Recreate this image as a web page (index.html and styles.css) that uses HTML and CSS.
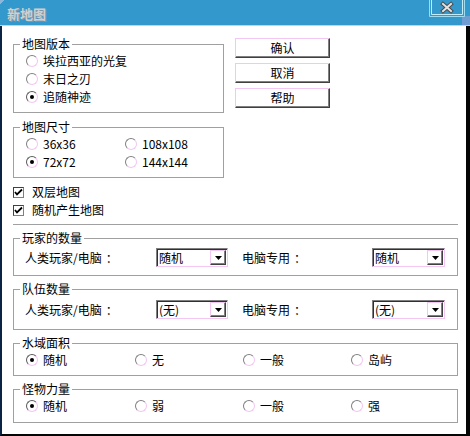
FILE: index.html
```html
<!DOCTYPE html>
<html lang="zh">
<head>
<meta charset="utf-8">
<title>新地图</title>
<link rel="stylesheet" href="styles.css">
</head>
<body>
<div class="window">
  <div class="titlebar">
    <span class="title">新地图</span>
    <span class="close">
      <svg width="36" height="18" viewBox="0 0 36 18">
        <path d="M0.5 0 V16.5 H35.5 V0" fill="none" stroke="#9fdcef"/>
        <path d="M2.5 0 V14.5 H33.5 V0" fill="none" stroke="#c4ecf8"/>
        <path d="M14 4 L22 11 M22 4 L14 11" stroke="#4a4a4a" stroke-width="4" stroke-linecap="square"/>
        <path d="M14 4 L22 11 M22 4 L14 11" stroke="#e2e2e2" stroke-width="2" stroke-linecap="square"/>
      </svg>
    </span>
  </div>
  <div class="frame">
    <div class="top">
      <div class="leftcol">
        <fieldset class="group">
          <legend>地图版本</legend>
          <div class="inner rows">
            <div class="opt"><span class="radio"></span>埃拉西亚的光复</div>
            <div class="opt"><span class="radio"></span>末日之刃</div>
            <div class="opt"><span class="radio on"></span>追随神迹</div>
          </div>
        </fieldset>
        <fieldset class="group">
          <legend>地图尺寸</legend>
          <div class="inner size-grid">
            <div class="opt"><span class="radio"></span>36x36</div>
            <div class="opt"><span class="radio"></span>108x108</div>
            <div class="opt"><span class="radio on"></span>72x72</div>
            <div class="opt"><span class="radio"></span>144x144</div>
          </div>
        </fieldset>
      </div>
      <div class="buttons">
        <div class="btn">确认</div>
        <div class="btn">取消</div>
        <div class="btn">帮助</div>
      </div>
    </div>
    <div class="checks">
      <div class="opt"><span class="check"><svg width="11" height="11" viewBox="0 0 11 11"><path d="M2 5 L4 7.5 L9 2.5" fill="none" stroke="#000" stroke-width="1.8"/></svg></span>双层地图</div>
      <div class="opt"><span class="check"><svg width="11" height="11" viewBox="0 0 11 11"><path d="M2 5 L4 7.5 L9 2.5" fill="none" stroke="#000" stroke-width="1.8"/></svg></span>随机产生地图</div>
    </div>
    <div class="sep"></div>
    <fieldset class="group g-players">
      <legend>玩家的数量</legend>
      <div class="inner sel-row">
        <span class="lbl1">人类玩家/电脑<span class="colon">：</span></span>
        <div class="select s1"><span class="val">随机</span><span class="drop"><svg width="7" height="4" viewBox="0 0 7 4"><path d="M0 0 H7 L3.5 4 Z" fill="#000"/></svg></span></div>
        <span class="lbl2">电脑专用<span class="colon">：</span></span>
        <div class="select s2"><span class="val">随机</span><span class="drop"><svg width="7" height="4" viewBox="0 0 7 4"><path d="M0 0 H7 L3.5 4 Z" fill="#000"/></svg></span></div>
      </div>
    </fieldset>
    <fieldset class="group g-teams">
      <legend>队伍数量</legend>
      <div class="inner sel-row">
        <span class="lbl1">人类玩家/电脑<span class="colon">：</span></span>
        <div class="select s1"><span class="val">(无)</span><span class="drop"><svg width="7" height="4" viewBox="0 0 7 4"><path d="M0 0 H7 L3.5 4 Z" fill="#000"/></svg></span></div>
        <span class="lbl2">电脑专用<span class="colon">：</span></span>
        <div class="select s2"><span class="val">(无)</span><span class="drop"><svg width="7" height="4" viewBox="0 0 7 4"><path d="M0 0 H7 L3.5 4 Z" fill="#000"/></svg></span></div>
      </div>
    </fieldset>
    <fieldset class="group g-water">
      <legend>水域面积</legend>
      <div class="inner four">
        <div class="opt"><span class="radio on"></span>随机</div>
        <div class="opt"><span class="radio"></span>无</div>
        <div class="opt"><span class="radio"></span>一般</div>
        <div class="opt"><span class="radio"></span>岛屿</div>
      </div>
    </fieldset>
    <fieldset class="group g-monster">
      <legend>怪物力量</legend>
      <div class="inner four">
        <div class="opt"><span class="radio on"></span>随机</div>
        <div class="opt"><span class="radio"></span>弱</div>
        <div class="opt"><span class="radio"></span>一般</div>
        <div class="opt"><span class="radio"></span>强</div>
      </div>
    </fieldset>
  </div>
</div>
</body>
</html>
```

FILE: styles.css
```css
* { box-sizing: border-box; }
html, body { margin: 0; padding: 0; }
body {
  width: 470px;
  height: 436px;
  overflow: hidden;
  background: #fff;
  font-family: "Noto Sans CJK SC", "Liberation Sans", sans-serif;
  font-size: 12px;
  line-height: 14px;
  color: #000;
}
.window {
  width: 470px;
  height: 436px;
  display: flex;
  flex-direction: column;
}
.titlebar {
  height: 26px;
  flex: none;
  display: flex;
  align-items: flex-start;
  border-bottom: 1px solid #a6def5;
  background:
    linear-gradient(135deg, #8fb6d6 0, #8fb6d6 3px, transparent 3px) left top / 8px 8px no-repeat,
    linear-gradient(#6f9dd2, #6f9dd2) right bottom / 8px 9px no-repeat,
    #3399cc;
}
.title {
  margin: 6px 0 0 7px;
  font-size: 13px;
  line-height: 15px;
  font-weight: bold;
  color: #d0d0d0;
  text-shadow: 1px 1px 0 #7f97a8;
}
.close {
  margin-left: auto;
  margin-right: 5px;
  width: 36px;
  height: 18px;
  display: block;
}
.close svg { display: block; }
.frame {
  flex: 1;
  border-left: 2px solid #0c2444;
  border-right: 4px solid #050505;
  border-bottom: 2px solid #050505;
  padding: 11px 8px 0 11px;
}
.top {
  display: flex;
  align-items: flex-start;
  gap: 11px;
}
.leftcol {
  width: 211px;
  display: flex;
  flex-direction: column;
  gap: 7px;
}
.buttons {
  display: flex;
  flex-direction: column;
  gap: 5px;
  margin-top: 1px;
}
.btn {
  width: 95px;
  height: 20px;
  background: #fff;
  border-style: solid;
  border-width: 1px;
  border-color: #f3c6f3 #404040 #404040 #f3c6f3;
  box-shadow: inset -1px -1px 0 #808080;
  display: flex;
  align-items: center;
  justify-content: center;
  padding-bottom: 1px;
}
.group {
  margin: 0;
  padding: 0;
  border: 1px solid #a0a0a0;
  min-width: 0;
}
.group legend {
  margin-left: 6px;
  padding: 0 2px;
  line-height: 14px;
}
.opt {
  height: 18px;
  display: flex;
  align-items: center;
  white-space: nowrap;
}
.radio {
  flex: none;
  width: 12px;
  height: 12px;
  margin-right: 5px;
  border-radius: 50%;
  border: 1px solid;
  border-color: #808080 #f3c6f3 #f3c6f3 #808080;
  position: relative;
}
.radio.on { border-color: #5a5a5a #f3c6f3 #f3c6f3 #5a5a5a; }
.radio.on::after {
  content: "";
  position: absolute;
  left: 3px;
  top: 3px;
  width: 4px;
  height: 4px;
  border-radius: 50%;
  background: #000;
}
.rows { padding: 1px 0 6px 12px; }
.size-grid {
  padding: 1px 0 6px 12px;
  display: grid;
  grid-template-columns: 99px auto;
}
.checks { margin-top: 5px; }
.check {
  flex: none;
  width: 11px;
  height: 11px;
  margin-right: 8px;
  border: 1px solid;
  border-color: #404040 #808080 #808080 #404040;
  background: #fff;
  display: flex;
}
.check svg { margin: -1px; }
.sep {
  margin-top: 5px;
  height: 1px;
  background: #a0a0a0;
}
.g-players { margin-top: 6px; }
.g-teams { margin-top: 6px; }
.g-water { margin-top: 6px; }
.g-monster { margin-top: 6px; }
.sel-row {
  display: flex;
  align-items: center;
  padding-left: 11px;
}
.g-players .sel-row { padding-top: 3px; padding-bottom: 8px; }
.g-teams .sel-row { padding-top: 4px; padding-bottom: 10px; }
.lbl1 { width: 131px; flex: none; }
.lbl2 { width: 130px; flex: none; margin-left: 14px; }
.colon { padding-left: 4px; }
.select {
  flex: none;
  height: 19px;
  border: 1px solid;
  border-color: #808080 #f3c6f3 #f3c6f3 #808080;
  box-shadow: inset 1px 1px 0 #303030;
  display: flex;
  align-items: center;
  padding: 1px 1px 1px 2px;
  background: #fff;
}
.s1 { width: 72px; }
.s2 { width: 73px; }
.select .val { flex: 1; }
.drop {
  flex: none;
  width: 16px;
  height: 15px;
  border: 1px solid;
  border-color: #f3c6f3 #404040 #404040 #f3c6f3;
  box-shadow: inset -1px -1px 0 #808080;
  display: flex;
  align-items: center;
  justify-content: center;
}
.drop svg { display: block; }
.four {
  display: grid;
  grid-template-columns: 109px 108px 108px auto;
  padding: 1px 0 6px 12px;
}
.g-monster .four { padding-bottom: 7px; }
```
